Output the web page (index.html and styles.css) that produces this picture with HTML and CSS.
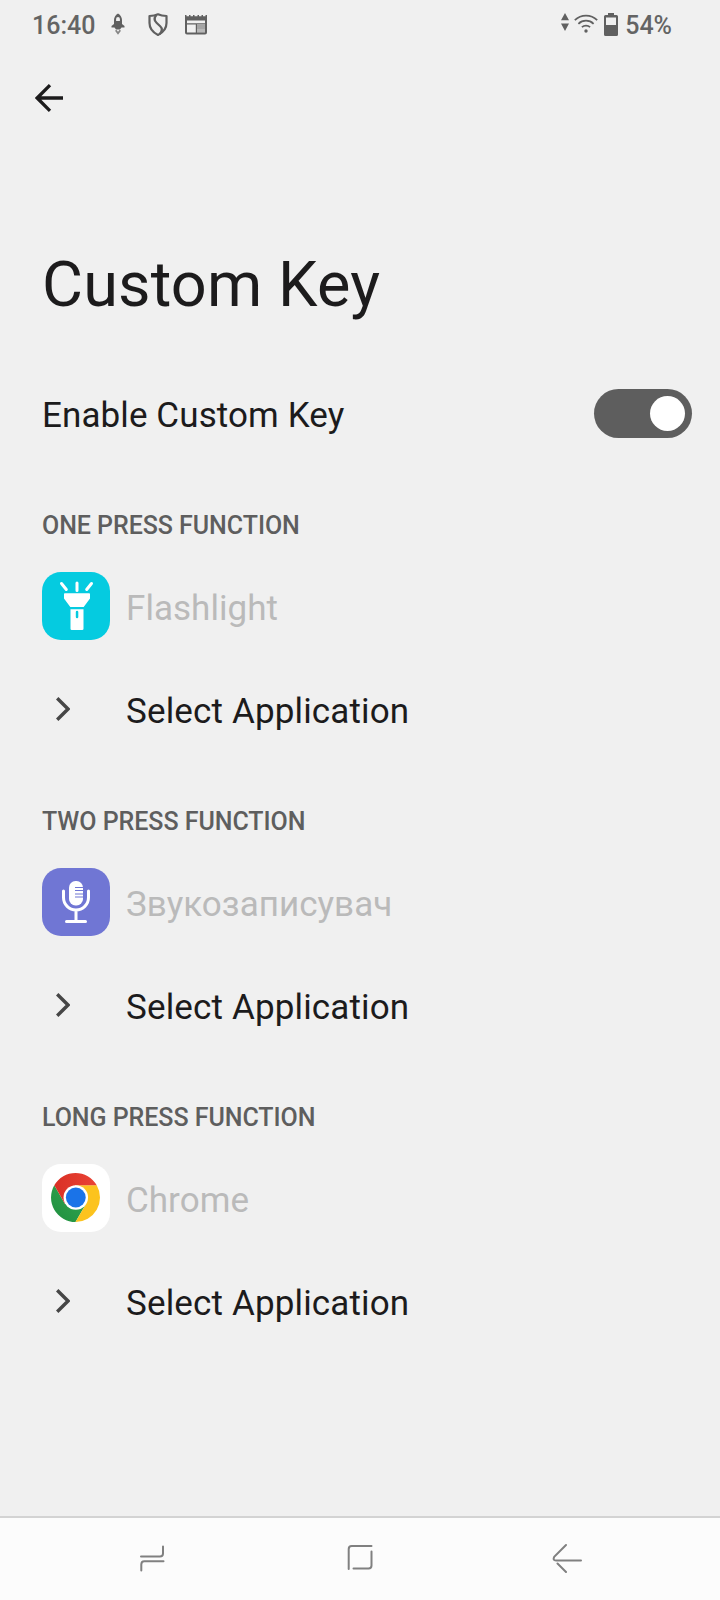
FILE: index.html
```html
<!DOCTYPE html>
<html lang="en">

<head>
    <meta charset="UTF-8">
    <title>Custom Key</title>
    <meta name="viewport" content="width=device-width,initial-scale=1" />
    <link rel="stylesheet" href="styles.css">
</head>

<body>

    <div class="status-bar">
        <span class="clock">16:40</span>
        <svg class="icon-rocket" width="14" height="24" viewBox="0 0 14 24">
            <path fill="#606060" fill-rule="evenodd" d="M7 1.500C4.300 3 3 5.500 3 8v4L.5 14v1.500h3L5 17.500h4l1.500-2h3V14L11 12V8c0-2.500-1.300-5-4-6.500zM7 5a1.900 1.900 0 0 1 1.900 1.900V9H5.100V6.900A1.900 1.900 0 0 1 7 5z" />
            <path fill="none" stroke="#858585" stroke-width="1.800" d="M4.700 18.300L7 21.300l2.300-3" />
        </svg>
        <svg class="icon-shield" width="20" height="24" viewBox="0 0 20 24">
            <path fill="none" stroke="#606060" stroke-width="2.200" stroke-linejoin="round" d="M10 1.300C7.500 2.500 4.500 3 1.500 3v7c0 5.500 3.500 9.500 8.500 12 5-2.500 8.500-6.500 8.500-12V3c-3 0-6-.5-8.500-1.700z" />
            <path fill="none" stroke="#606060" stroke-width="2.200" d="M8.500 2C6.200 4.500 6 7.500 8.500 9.800l3.700 3.400c2.500 2.300 2 5-.5 8" />
        </svg>
        <svg class="icon-news" width="22" height="20" viewBox="0 0 22 20">
            <path fill="#606060" fill-rule="evenodd" d="M0 0h1.500v1.300H4V0h1.500v1.300H8V0h1.500v1.300h3V0H14v1.300h2.500V0H18v1.300h2.500V0H22v17.500q0 2-2 2H2q-2 0-2-2zM2 5.500v2.700h18V5.500zM2 9.500v8h8.800v-8zM12 9.500v8h8v-8z" />
            <path fill="#a5a5a5" d="M12 9.500h8v4.500h-8z" />
            <path fill="none" stroke="#808080" stroke-width="1.200" d="M12 15h8M12 17h8" />
        </svg>
        <div class="status-right">
            <svg class="icon-data" width="8" height="18" viewBox="0 0 8 18">
                <path fill="#606060" d="M4 0l4 7.300H0zM4 18l4-7.600H0z" />
            </svg>
            <svg class="icon-wifi" width="24" height="19" viewBox="0 0 24 19">
                <path fill="none" stroke="#606060" stroke-width="1.700" d="M.8 6.200a16 16 0 0 1 22.400 0M4.400 9.800a10.900 10.900 0 0 1 15.200 0M7.900 13.200a5.900 5.900 0 0 1 8.200 0" />
                <circle cx="12" cy="17" r="1.700" fill="#606060" />
            </svg>
            <svg class="icon-battery" width="14" height="23" viewBox="0 0 14 23">
                <path fill="#606060" fill-rule="evenodd" d="M4 0h6v2h2.500Q14 2 14 3.500v18q0 1.500-1.500 1.500h-11Q0 23 0 21.500v-18Q0 2 1.500 2H4zM2 4.500V12h10V4.500z" />
            </svg>
            <span class="percent">54%</span>
        </div>
    </div>

    <div class="toolbar">
        <svg width="28" height="28" viewBox="0 0 28 28">
            <path fill="none" stroke="#1c1b1c" stroke-width="3.300" d="M28 14H3M15 1.200L2.200 14 15 26.800" />
        </svg>
    </div>

    <h1 class="title">Custom Key</h1>

    <div class="switch-row">
        <span class="label">Enable Custom Key</span>
        <div class="switch"><div class="thumb"></div></div>
    </div>

    <div class="section">
        <h2>ONE PRESS FUNCTION</h2>
        <div class="row disabled">
            <svg class="app-icon" width="68" height="68" viewBox="0 0 68 68">
                <rect width="68" height="68" rx="19" fill="#05cbe0" />
                <path stroke="#fff" stroke-width="3" stroke-linecap="round" d="M19.500 11.500l4.800 6M35 11v7.500M49.500 11.500l-4.800 6" />
                <path fill="#fff" fill-rule="evenodd" d="M22.800 21.200h24.400q.8 0 .8.800v4.500L41.700 35H28.300L22 26.500V22q0-.8.8-.8zM28.500 37.200h13v19.500q0 1.300-1.300 1.300H29.800q-1.300 0-1.300-1.300zM33.800 40v5a1.200 1.200 0 0 0 2.500 0v-5a1.200 1.200 0 0 0-2.500 0z" />
            </svg>
            <span class="label">Flashlight</span>
        </div>
        <div class="row select">
            <svg class="chevron" width="14" height="24" viewBox="0 0 14 24">
                <path fill="none" stroke="#464646" stroke-width="3.400" d="M1.200 1.200L12 12 1.200 22.800" />
            </svg>
            <span class="label">Select Application</span>
        </div>
    </div>

    <div class="section">
        <h2>TWO PRESS FUNCTION</h2>
        <div class="row disabled">
            <svg class="app-icon" width="68" height="68" viewBox="0 0 68 68">
                <rect width="68" height="68" rx="19" fill="#7076d4" />
                <rect x="27" y="13" width="14" height="24.500" rx="6.500" fill="#fff" />
                <path stroke="#7076d4" stroke-width="1.200" d="M33 19.500h8M33 22.500h8M33 26h8M33 29h8" />
                <path fill="none" stroke="#fff" stroke-width="3" stroke-linecap="round" d="M21.500 23v6.500a12.500 12.500 0 0 0 25 0V23M34 43v10M24.500 53.500h19" />
            </svg>
            <span class="label">Звукозаписувач</span>
        </div>
        <div class="row select">
            <svg class="chevron" width="14" height="24" viewBox="0 0 14 24">
                <path fill="none" stroke="#464646" stroke-width="3.400" d="M1.200 1.200L12 12 1.200 22.800" />
            </svg>
            <span class="label">Select Application</span>
        </div>
    </div>

    <div class="section">
        <h2>LONG PRESS FUNCTION</h2>
        <div class="row disabled">
            <svg class="app-icon" width="68" height="68" viewBox="0 0 68 68">
                <defs>
                    <linearGradient id="red" x1="0" x2="1">
                        <stop offset="0" stop-color="#d93025" />
                        <stop offset="1" stop-color="#ea4335" />
                    </linearGradient>
                    <linearGradient id="green" x1="0" y1="1" x2="1" y2="0">
                        <stop offset="0" stop-color="#1e8e3e" />
                        <stop offset="1" stop-color="#34a853" />
                    </linearGradient>
                </defs>
                <rect width="68" height="68" rx="19" fill="#fff" />
                <path fill="url(#green)" d="M12.300 21.250A24.500 24.500 0 0 0 33.500 58L44.110 39.630H22.890z" />
                <path fill="#fcc31e" d="M33.500 58A24.500 24.500 0 0 0 54.720 21.250H33.500L44.110 39.630z" />
                <path fill="url(#red)" d="M12.300 21.250a24.500 24.500 0 0 1 42.420 0H33.500L22.890 39.630z" />
                <circle cx="33.800" cy="33.500" r="12.250" fill="#fff" />
                <circle cx="33.800" cy="33.500" r="9.900" fill="#1a73e8" />
            </svg>
            <span class="label">Chrome</span>
        </div>
        <div class="row select">
            <svg class="chevron" width="14" height="24" viewBox="0 0 14 24">
                <path fill="none" stroke="#464646" stroke-width="3.400" d="M1.200 1.200L12 12 1.200 22.800" />
            </svg>
            <span class="label">Select Application</span>
        </div>
    </div>

    <div class="nav-bar">
        <svg width="26" height="28" viewBox="0 0 26 28">
            <path d="M2 12.500h19q3 0 3-3V2.500M2.300 26.500V20.500q0-3.300 3-3.300H24.500" />
        </svg>
        <svg width="26" height="28" viewBox="0 0 26 28">
            <path d="M1.700 25V5q0-3 3-3H24.500M24.500 7.500V21.500q0 3-3 3H6.500" />
        </svg>
        <svg class="nav-back" width="30" height="30" viewBox="0 0 30 30">
            <path d="M14 2L2.200 13.800Q.5 17.500 4 17.500H29M5.500 20.500L14 29" />
        </svg>
    </div>

</body>

</html>
```

FILE: styles.css
```css
* {
    box-sizing: border-box;
}

body {
    display: flex;
    flex-direction: column;
    width: 720px;
    height: 1600px;
    margin: 0;
    overflow: hidden;
    background: #f0f0f0;
    color: #1c1b1c;
    font-family: Roboto, "Noto Sans", sans-serif;
}

svg {
    display: block;
    flex: none;
}

/* status bar */
.status-bar {
    display: flex;
    align-items: flex-start;
    height: 49px;
    padding: 0 49px 0 32px;
    color: #646464;
    font-size: 25px;
    font-weight: 500;
    line-height: 52px;
}

.clock {
    width: 79px;
}

.icon-rocket {
    margin-top: 12px;
}

.icon-shield {
    margin: 13px 0 0 23px;
}

.icon-news {
    margin: 15px 0 0 17px;
}

.status-right {
    display: flex;
    margin-left: auto;
}

.icon-data {
    margin-top: 13px;
}

.icon-wifi {
    margin: 14px 0 0 5px;
}

.icon-battery {
    margin: 13px 7px 0 6px;
}

.percent {
    margin-right: -1px;
}

/* header */
.toolbar {
    display: flex;
    align-items: center;
    height: 98px;
    padding-left: 35px;
}

.title {
    height: 216px;
    margin: 0;
    padding: 98px 0 0 42px;
    font-size: 63px;
    font-weight: 400;
    line-height: 80px;
    letter-spacing: 0.15px;
}

.label {
    padding-top: 4px;
    font-size: 35px;
    line-height: 42px;
    letter-spacing: 0.1px;
}

.switch-row {
    display: flex;
    align-items: center;
    justify-content: space-between;
    height: 101px;
    padding: 0 28px 0 42px;
}

.switch {
    display: flex;
    justify-content: flex-end;
    width: 98px;
    height: 49px;
    padding: 7px;
    border-radius: 25px;
    background: #5e5e5e;
}

.thumb {
    width: 35px;
    height: 35px;
    border-radius: 50%;
    background: #fff;
}

/* sections */
.section {
    height: 296px;
}

.section h2 {
    height: 91px;
    margin: 0;
    padding: 33px 0 0 42px;
    color: #5e5e5e;
    font-size: 25px;
    font-weight: 500;
    line-height: 58px;
    letter-spacing: -0.05px;
}

.row {
    display: flex;
    align-items: center;
    height: 102px;
    padding-left: 42px;
}

.row .label {
    padding-top: 6px;
    letter-spacing: 0.15px;
}

.disabled .label {
    color: #bababa;
    letter-spacing: 0.03px;
}

.app-icon {
    margin-right: 16px;
}

.select {
    height: 103px;
    padding-left: 56px;
}

.chevron {
    margin-right: 56px;
}

/* navigation */
.nav-bar {
    display: flex;
    align-items: flex-start;
    gap: 182px;
    height: 84px;
    margin-top: auto;
    padding: 26px 0 0 139px;
    border-top: 2px solid #d3d3d3;
    background: #fcfcfc;
}

.nav-bar path {
    fill: none;
    stroke: #808080;
    stroke-width: 2;
    stroke-linecap: round;
}

.nav-back {
    margin: -1px 0 0 -3px;
}
```
